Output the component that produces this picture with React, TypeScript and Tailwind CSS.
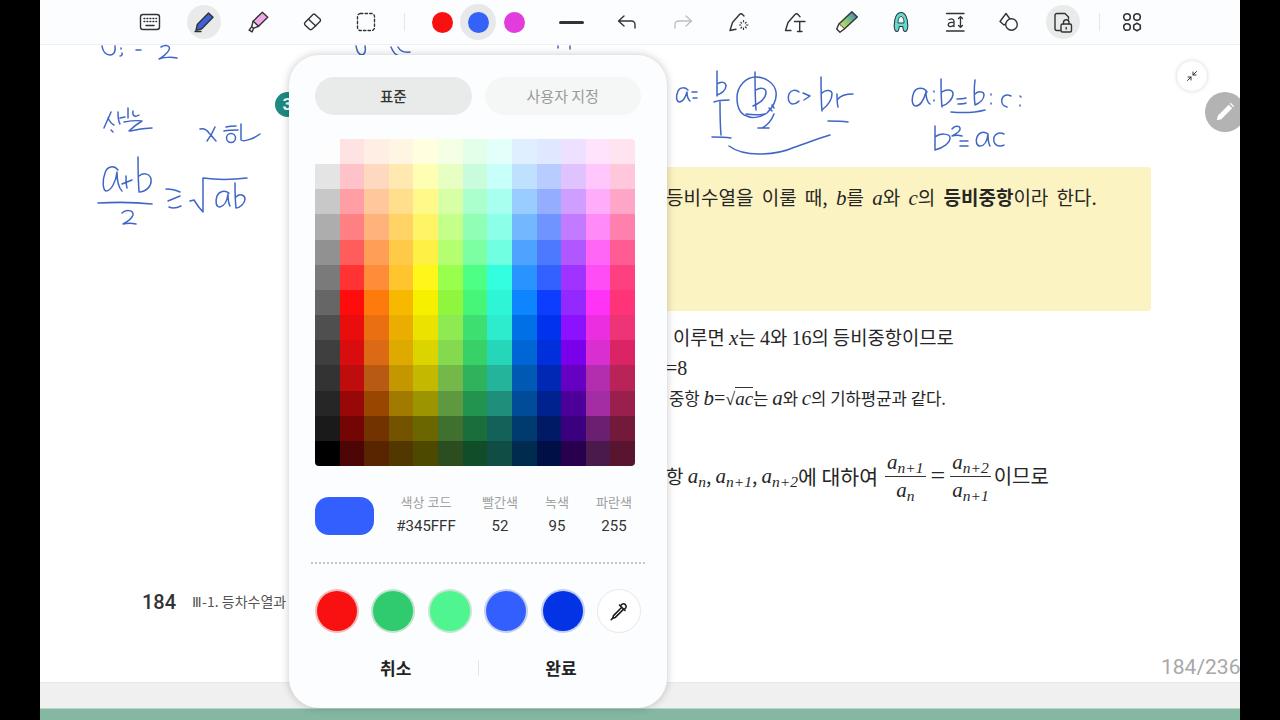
import React from "react";

const KR = "font-['Noto_Sans_CJK_KR','Noto_Sans',sans-serif]";
const palette = [
"bg-[#fdfdfd]","bg-[#ffe3e3]","bg-[#ffeee3]","bg-[#fff5e3]","bg-[#ffffe0]","bg-[#f4ffe3]","bg-[#e3ffe9]","bg-[#e3fff9]","bg-[#e0efff]","bg-[#e0e8ff]","bg-[#eee0ff]","bg-[#ffe3fc]","bg-[#ffe3ee]",
"bg-[#e4e4e4]","bg-[#ffc2c9]","bg-[#ffd9bf]","bg-[#ffe9b0]","bg-[#ffffb3]","bg-[#e8ffc4]","bg-[#c9fcdc]","bg-[#c9fffa]","bg-[#bfe0ff]","bg-[#b8ccff]","bg-[#e0c2ff]","bg-[#ffc7fc]","bg-[#ffc7dc]",
"bg-[#c8c8c8]","bg-[#ff9fa3]","bg-[#ffc79c]","bg-[#ffde8c]","bg-[#fff98a]","bg-[#d6ffa6]","bg-[#aaffcc]","bg-[#a8fff0]","bg-[#99ccff]","bg-[#94adff]","bg-[#cf9fff]","bg-[#ffadfa]","bg-[#ffa6c8]",
"bg-[#adadad]","bg-[#ff8083]","bg-[#ffb27a]","bg-[#ffd366]","bg-[#fff466]","bg-[#c4ff8a]","bg-[#8fffb5]","bg-[#8cffe8]","bg-[#73b8ff]","bg-[#7094ff]","bg-[#c27aff]","bg-[#ff8af8]","bg-[#ff80ad]",
"bg-[#919191]","bg-[#ff5c5c]","bg-[#ff9f57]","bg-[#ffca47]","bg-[#fff045]","bg-[#b4ff70]","bg-[#7affa3]","bg-[#70ffe0]","bg-[#4da3ff]","bg-[#4d79ff]","bg-[#b057ff]","bg-[#ff66f5]","bg-[#ff5c94]",
"bg-[#7a7a7a]","bg-[#ff3333]","bg-[#ff8c38]","bg-[#ffc42e]","bg-[#fff71a]","bg-[#99ff4d]","bg-[#4dff85]","bg-[#33ffe0]","bg-[#2994ff]","bg-[#3361ff]","bg-[#a033ff]","bg-[#ff4df5]","bg-[#ff4080]",
"bg-[#666666]","bg-[#ff0d0d]","bg-[#ff7a0d]","bg-[#f7b900]","bg-[#f7ef00]","bg-[#8ff53d]","bg-[#47f578]","bg-[#2ef5d6]","bg-[#0d85ff]","bg-[#0d3dff]","bg-[#9429ff]","bg-[#ff33f5]","bg-[#ff3377]",
"bg-[#4f4f4f]","bg-[#ea0d0d]","bg-[#ea6f10]","bg-[#ebae00]","bg-[#ebe200]","bg-[#8eea52]","bg-[#3de070]","bg-[#2ceccd]","bg-[#0070e6]","bg-[#0033ee]","bg-[#8c12ff]","bg-[#ea2ee0]","bg-[#ee3377]",
"bg-[#3f3f3f]","bg-[#d90d0d]","bg-[#dc6a14]","bg-[#deaa00]","bg-[#dcd400]","bg-[#85d94f]","bg-[#38d167]","bg-[#26d6b8]","bg-[#0066d6]","bg-[#002fdb]","bg-[#7a00eb]","bg-[#d92ed0]","bg-[#db2466]",
"bg-[#333333]","bg-[#bf0d0d]","bg-[#b85a14]","bg-[#c49600]","bg-[#c4b800]","bg-[#75b84a]","bg-[#2eb35c]","bg-[#24b39b]","bg-[#0059b3]","bg-[#0029b3]","bg-[#6600c2]","bg-[#b32eae]","bg-[#b82457]",
"bg-[#262626]","bg-[#990808]","bg-[#994700]","bg-[#a37a00]","bg-[#9c9400]","bg-[#5e9940]","bg-[#239450]","bg-[#1f8f7c]","bg-[#004c99]","bg-[#00228f]","bg-[#4d0099]","bg-[#a32ea3]","bg-[#991f4d]",
"bg-[#1a1a1a]","bg-[#730505]","bg-[#733300]","bg-[#735200]","bg-[#6b6600]","bg-[#40702e]","bg-[#1a6e3b]","bg-[#14615a]","bg-[#003b70]","bg-[#001a66]","bg-[#3b0080]","bg-[#6b1f70]","bg-[#731a3b]",
"bg-[#000000]","bg-[#4d0505]","bg-[#592400]","bg-[#523800]","bg-[#4d4a00]","bg-[#2b4d1f]","bg-[#124d29]","bg-[#0f4d45]","bg-[#002b4f]","bg-[#001047]","bg-[#29004d]","bg-[#4a1a4d]","bg-[#591430]",
];

function Ic({ children }: { children: React.ReactNode }) {
  return (
    <svg width="24" height="24" viewBox="0 0 24 24" fill="none" stroke="#333" strokeWidth="1.4" strokeLinecap="round" strokeLinejoin="round">
      {children}
    </svg>
  );
}

function Slot({ children, active, className }: { children: React.ReactNode; active?: boolean; className?: string }) {
  return (
    <div className={`flex h-[34px] w-[34px] shrink-0 items-center justify-center rounded-full ${active ? "bg-[#e9ebeb]" : ""} ${className ?? ""}`}>
      {children}
    </div>
  );
}

function Toolbar() {
  return (
    <div className="flex h-[45px] shrink-0 items-center border-b border-[#eef0f2] bg-[#fcfdfe] pl-[93px]">
      <Slot>
        <Ic>
          <rect x="2.5" y="4.5" width="19" height="15" rx="2.5" />
          <path d="M6 8.5h.8M9 8.5h.8M12 8.5h.8M15 8.5h.8M18 8.5h.5M6 11.5h.8M9 11.5h.8M12 11.5h.8M15 11.5h.8M18 11.5h.5M8 15.5h8" strokeWidth="1.5" />
        </Ic>
      </Slot>
      <Slot active className="ml-5">
        <Ic>
          <path d="M16.5 3l4.5 4.3L9.5 19 4 20.4 5.3 14.5z" fill="#3b62d9" />
          <path d="M3 21.5h6" />
        </Ic>
      </Slot>
      <Slot className="ml-5">
        <svg width="26" height="26" viewBox="0 0 24 24" fill="none" stroke="#333" strokeWidth="1.3" strokeLinecap="round" strokeLinejoin="round">
          <path d="M16 3l5 4.6-8.5 8.4-5-4.8z" fill="#f0a8e8" />
          <path d="M7.5 11.2l-1.3 5 1.7 1.6 4.6-1.8M6.2 16.2L3.8 19.6l2.8 1.6 1.3-3.4" />
        </svg>
      </Slot>
      <Slot className="ml-5">
        <Ic>
          <path d="M15 4.5l5 4.6a1.6 1.6 0 0 1 0 2.3l-7.5 7.4a2.5 2.5 0 0 1-3.5 0l-3.8-3.6a2 2 0 0 1 0-3L13 4.5a1.5 1.5 0 0 1 2 0z" />
          <path d="M8.8 9.5l7 6.4" />
        </Ic>
      </Slot>
      <Slot className="ml-5">
        <Ic>
          <rect x="3.5" y="3.5" width="17" height="17" rx="3" strokeDasharray="2.4 2.2" />
        </Ic>
      </Slot>
      <div className="ml-[21px] h-[18px] w-px bg-[#e4e6e8]" />
      <div className="ml-[19px] flex items-center">
        <div className="flex h-9 w-9 items-center justify-center"><div className="h-[21px] w-[21px] rounded-full bg-[#f91010]" /></div>
        <div className="flex h-9 w-9 items-center justify-center rounded-full bg-[#e6e8ea]"><div className="h-[21px] w-[21px] rounded-full bg-[#3461f8]" /></div>
        <div className="flex h-9 w-9 items-center justify-center"><div className="h-[21px] w-[21px] rounded-full bg-[#e23cdc]" /></div>
      </div>
      <div className="ml-[27px] h-[3px] w-[25px] rounded-full bg-[#333]" />
      <Slot className="ml-[26px]">
        <Ic><path d="M9 6l-5.5 5L9 16M4 11h12.5a3.5 3.5 0 0 1 3.5 3.5V18" /></Ic>
      </Slot>
      <Slot className="ml-[22px]">
        <Ic><g stroke="#bdbfc1"><path d="M15 6l5.5 5L15 16M20 11H7.5A3.5 3.5 0 0 0 4 14.5V18" /></g></Ic>
      </Slot>
      <Slot className="ml-[22px]">
        <Ic>
          <path d="M3 20.5l2.5-8 7-8a2 2 0 0 1 3 0l1.5 1.6M3 20.5l6-1.2" />
          <path d="M16.5 10.5v1.2M16.5 18v1.5M12.5 15h1.3M19.2 15h1.8M13.8 12.3l.8.8M18.4 17l.9.9M19.2 12.3l-.9.8M14 18l.8-.8" strokeWidth="1.2" />
        </Ic>
      </Slot>
      <Slot className="ml-[22px]">
        <Ic>
          <path d="M2.5 20.5l2.5-8 7-8a2 2 0 0 1 3 0l2 2.2M2.5 20.5H8" />
          <path d="M11.5 11.5H22M16.7 11.5V21.5M14.5 21.5h4.5" />
        </Ic>
      </Slot>
      <Slot className="ml-[18px]">
        <svg width="26" height="26" viewBox="0 0 24 24" fill="none" stroke="#333" strokeWidth="1.3" strokeLinejoin="round">
          <defs>
            <linearGradient id="grad" x1="0" y1="1" x2="1" y2="0">
              <stop offset="0" stopColor="#e8e06a" />
              <stop offset="0.5" stopColor="#7cc77a" />
              <stop offset="1" stopColor="#3a6fd0" />
            </linearGradient>
          </defs>
          <path d="M16.5 2.5l5 4.8L9.5 18.5l-5-4.7z" fill="url(#grad)" />
          <path d="M4.5 13.8L2.5 18.5l3 3 4-3" fill="#fff" />
        </svg>
      </Slot>
      <Slot className="ml-5">
        <svg width="24" height="24" viewBox="0 0 24 24" fill="none" strokeLinejoin="round">
          <path d="M12 2.5c-4.5 0-6.8 6-6.8 13 0 3.5.8 6 2.8 6s2-3 2.2-5h3.6c.2 2 .2 5 2.2 5s2.8-2.5 2.8-6c0-7-2.3-13-6.8-13z" fill="#63d9d2" stroke="#2f3a3a" strokeWidth="1.1" />
          <path d="M12 6.5c-2 0-3 3-3 6.5h6c0-3.5-1-6.5-3-6.5z" fill="#e8fbfa" stroke="#2f3a3a" strokeWidth="1" />
        </svg>
      </Slot>
      <Slot className="ml-5">
        <svg width="24" height="24" viewBox="0 0 24 24" fill="none" stroke="#333" strokeWidth="1.3" strokeLinecap="round">
          <path d="M3.5 3.5h17.5M3.5 21h17.5" strokeWidth="1.4" />
          <path d="M17.5 7v10M15.5 8.5l2-1.8 2 1.8M15.5 15.5l2 1.8 2-1.8" />
          <path d="M6 9.5c2-1 5-.8 5 1.5v5.5M11 12.6c-3-.5-5.8 0-5.8 2.2s3.8 2.4 5.8.2" />
        </svg>
      </Slot>
      <Slot className="ml-5">
        <Ic>
          <path d="M9 3.5l-6 8 4 3.5 7-4.5z" strokeWidth="1.4" />
          <circle cx="14.5" cy="14.5" r="5.8" fill="#fcfdfe" />
        </Ic>
      </Slot>
      <Slot active className="ml-5">
        <Ic>
          <path d="M9.5 20.5H6a2 2 0 0 1-2-2v-13a2 2 0 0 1 2-2h8l3.5 3.5V9" />
          <rect x="10" y="14" width="10.5" height="8" rx="1.5" />
          <path d="M12.5 14v-2a2.8 2.8 0 0 1 5.5 0v2M15.2 17.5v1.5" />
        </Ic>
      </Slot>
      <div className="ml-[19px] h-[18px] w-px bg-[#e4e6e8]" />
      <Slot className="ml-[15px]">
        <Ic>
          <circle cx="7" cy="7" r="3.3" strokeWidth="1.6" />
          <circle cx="17" cy="7" r="3.3" strokeWidth="1.6" />
          <circle cx="7" cy="17" r="3.3" strokeWidth="1.6" />
          <path d="M17 13.2l3.3 1.9v3.8L17 20.8l-3.3-1.9v-3.8z" strokeWidth="1.6" />
        </Ic>
      </Slot>
    </div>
  );
}

function Ink() {
  return (
    <svg className="pointer-events-none absolute left-0 top-0" width="1200" height="720" viewBox="40 0 1200 720" fill="none" stroke="#3f66c6" strokeWidth="1.5" strokeLinecap="round" strokeLinejoin="round">
      {/* top-left partial */}
      <path d="M102 46c1 6 4 9 8 9s6-4 5-9M121 48v1M122 53c1 2-1 3-2 3M136 50h5M161 47c5-3 10-1 8 3-2 4-8 8-10 9 4-2 13-2 18-1" />
      <path d="M356 46c1 5 2 8 6 9 3-1 4-4 3-9M391 47c2 5 4 8 8 9M398 47c2 4 5 6 12 5M558 46v2M570 46v3" />
      {/* left notes */}
      <path d="M104 128c2-5 5-11 7-16M108 118c2 4 4 6 6 7M111 130l2 2M118 112c0 5 0 9 2 12M120 118l5-1M128 108v10M133 111c-1 6 3 6 6 4M124 122c6-1 13-2 18-1-5 3-8 5-13 10 7-1 16-3 23-3" />
      <path d="M200 129c4-1 7 1 9 4 3 3 5 6 7 8M215 127c-2 5-5 10-8 14M226 127c4-1 7-1 10-1M224 131c5-1 9-1 14-1" />
      <circle cx="231" cy="138" r="4.5" />
      <path d="M241 124v16c3 2 12-1 19-6" />
      {/* a+b / 2 >= sqrt(ab) */}
      <path d="M118 170c-4-5-11-4-13 3-3 8-2 17 1 18 5 0 10-9 11-19 0 7 1 15 5 19M122 184l10-4M126 176c0 4 0 8 1 12M138 157c0 11 0 22 1 34M139 176c5-4 11-2 12 3 1 7-5 13-12 13" />
      <path d="M98 203c18-1 36-1 54 1" strokeWidth="1.7" />
      <path d="M122 213c4-4 12-3 11 2-1 3-6 7-10 9 4-1 9-1 13 0" />
      <path d="M166 189c5 0 10 1 14 3M169 207c4 2 8 1 12-1M180 196l-12 5" />
      <path d="M190 201l4-1c3 5 6 9 9 12 0-11 0-22 0-34 14 2 28 2 44 0" />
      <path d="M229 193c-4-3-10-2-12 3-2 6-1 11 3 11 4-1 7-5 8-13 0 5 0 9 2 12M235 183c0 8 0 16 1 25M236 197c4-4 9-2 9 2 0 4-5 9-9 9" />
      {/* a = b/r ... */}
      <path d="M688 90c-3-3-8-3-10 1-2 5-2 10 1 11 3 0 6-3 8-10 0 4 1 7 3 9M692 92h5M693 98h4" />
      <path d="M717 71c0 8 0 17 0 25M717 84c4-3 9-2 9 2 0 4-5 8-9 9" />
      <path d="M714 102c5-2 10-2 15-2M720 102c0 11 0 22 1 33M712 137c6 0 12 0 19 1" />
      <path d="M756 77c-10 0-19 9-19 21 0 10 4 17 10 18 6 3 14 1 20-3 6-6 10-14 9-21-1-8-10-15-20-15z" />
      <path d="M755 72c0 12 0 25 1 38M756 90c4-3 10-2 10 2 0 6-6 11-13 14M746 114c6 1 13 1 19 0M758 128c4 0 8 0 11 0M769 108l3 3M772 105l2 3M762 128c4-2 9-6 12-14" />
      <path d="M799 92c-3-3-8-2-10 2-2 5 0 9 3 10 3 0 5-1 7-3M803 93l7 3-6 4" />
      <path d="M821 77c0 11 0 23 1 34M822 93c4-4 10-3 10 1 0 6-5 12-10 16M837 94c0 5 0 9 1 13M838 99c3-4 8-5 15-5M828 121c6 0 13 0 20 1" />
      <path d="M729 146c8 6 18 8 30 8 14 0 25-2 36-7 12-4 24-9 35-12" />
      {/* a:b = b:c */}
      <path d="M927 92c-3-5-10-5-13 0-3 7-2 14 2 14 4 0 8-6 10-14 0 5 1 10 4 12M934 91v1M934 100v1M941 79c0 9 0 19 1 28M942 92c4-3 11-3 11 2s-6 11-11 12M957 99c3 0 6 0 9-1M958 104c3 0 6 0 8-1M975 80c-1 8-1 16 0 25M975 94c3-3 9-3 9 1s-4 8-9 10M991 94v1M991 103v1M1011 96c-4-2-8-1-9 3-1 4 1 7 5 8M1020 96l1 1M1020 105v1M951 112c11 1 23 1 34-2" />
      <path d="M935 126c0 8 0 16 0 24M935 137c5-4 15-4 15 1 0 5-7 10-15 12M952 129c2-3 7-4 8-1 1 3-4 6-8 8 3-1 7-1 10 0M960 141h8M960 146h8M988 134c-4-3-9-2-11 3-2 5 0 9 3 9 4 0 7-4 8-12 0 5 0 9 2 12M1004 134c-4-2-8-1-10 3-1 5 1 9 6 9 1 0 3 0 4-1" />
    </svg>
  );
}

function Italic({ children }: { children: React.ReactNode }) {
  return <span className="font-['Liberation_Serif',serif] italic text-[21px]">{children}</span>;
}
function Serif({ children }: { children: React.ReactNode }) {
  return <span className="font-['Liberation_Serif',serif] text-[20px]">{children}</span>;
}
function Sub({ children }: { children: React.ReactNode }) {
  return <sub className="font-['Liberation_Serif',serif] text-[15.5px] italic leading-none">{children}</sub>;
}
function Frac({ top, bottom }: { top: React.ReactNode; bottom: React.ReactNode }) {
  return (
    <span className="mx-[3px] inline-flex flex-col items-center align-middle leading-none">
      <span className="border-b border-[#333] px-[2px] pb-[3px]">{top}</span>
      <span className="pt-[2px]">{bottom}</span>
    </span>
  );
}

function Doc() {
  return (
    <div className="flex min-h-0 flex-1 flex-col">
      <div className={`ml-[626px] pt-[122px] text-[19px] leading-[24px] text-[#262626] ${KR}`}>
        <div className="h-[144px] w-[485px] rounded-r-[3px] bg-[#fcf3c2] pt-[18px] whitespace-nowrap [word-spacing:4px]">
          등비수열을 이룰 때, <Italic>b</Italic>를 <Italic>a</Italic>와 <Italic>c</Italic>의 <b className="font-bold">등비중항</b>이라 한다.
        </div>
        <div className="mt-[14px] whitespace-nowrap pl-[7px] text-[18.8px]">
          이루면 <Italic>x</Italic>는 <Serif>4</Serif>와 <Serif>16</Serif>의 등비중항이므로
        </div>
        <div className="mt-[5px] whitespace-nowrap"><Serif>=8</Serif></div>
        <div className="mt-[6px] whitespace-nowrap pl-[3px] text-[16.7px]">
          중항 <Italic>b</Italic><Serif>=</Serif>
          <span className="font-['Liberation_Serif',serif] text-[18px]">√</span>
          <span className="border-t border-[#333] font-['Liberation_Serif',serif] text-[19px] italic">ac</span>는 <Italic>a</Italic>와 <Italic>c</Italic>의 기하평균과 같다.
        </div>
        <div className="mt-[40px] flex items-center whitespace-nowrap">
          <span>항&nbsp;</span>
          <Italic>a<Sub>n</Sub></Italic><span>,&nbsp;</span>
          <Italic>a<Sub>n+1</Sub></Italic><span>,&nbsp;</span>
          <Italic>a<Sub>n+2</Sub></Italic><span className="text-[20.5px]">에 대하여</span>
          <span className="w-[4px]" />
          <Frac top={<Italic>a<Sub>n+1</Sub></Italic>} bottom={<Italic>a<Sub>n</Sub></Italic>} />
          <span className="mx-[2px] font-['Liberation_Serif',serif] text-[26px]">=</span>
          <Frac top={<Italic>a<Sub>n+2</Sub></Italic>} bottom={<Italic>a<Sub>n+1</Sub></Italic>} />
          <span className="text-[20px]">이므로</span>
        </div>
      </div>
      <div className={`mt-auto mb-[68px] ml-[102px] flex items-center whitespace-nowrap ${KR}`}>
        <span className="font-['Roboto',sans-serif] text-[20px] font-medium leading-[24px] text-[#333]">184</span>
        <span className="ml-[16px] text-[14px] leading-[20px] text-[#555]"><span className="font-['Liberation_Serif',serif]">Ⅲ</span>-1. 등차수열과</span>
      </div>
    </div>
  );
}

const swatches = [
  ["bg-[#f91010]", "ring-[#f2bcbc]"],
  ["bg-[#2fcb6e]", "ring-[#bfe4cd]"],
  ["bg-[#4ff58e]", "ring-[#c5e6d2]"],
  ["bg-[#345fff]", "ring-[#c5d0ee]"],
  ["bg-[#0433e6]", "ring-[#c2cff2]"],
];

const Label = "text-[13px] leading-[18px] text-[#a0a0a0] whitespace-nowrap";
const Value = "mt-[6px] font-['Roboto',sans-serif] text-[15px] leading-[18px] text-[#333] whitespace-nowrap";

function Popup() {
  return (
    <div className={`absolute left-[249px] top-[55px] flex h-[653px] w-[378px] flex-col rounded-[30px] bg-[#fbfdfe] px-[26px] shadow-[0_0_8px_rgba(0,0,0,0.22)] ${KR}`}>
      <div className="mt-[22px] flex gap-[13px]">
        <div className="flex h-[38px] w-[157px] items-center justify-center rounded-full bg-[#e9ebeb] text-[14.5px] font-medium text-[#333]">표준</div>
        <div className="flex h-[38px] w-[157px] items-center justify-center rounded-full bg-[#f5f6f6] text-[15px] text-[#9a9a9a]">사용자 지정</div>
      </div>
      <div className="mt-[24px] grid h-[327px] w-[320px] grid-cols-[repeat(13,1fr)] grid-rows-[repeat(13,1fr)] overflow-hidden rounded-[4px]">
        {palette.map((c, i) => (
          <div key={i} className={c} />
        ))}
      </div>
      <div className="mt-[27px] flex items-start">
        <div className="mt-[4px] h-[38px] w-[59px] rounded-[14px] bg-[#345fff]" />
        <div className="ml-[21px] flex w-[62px] flex-col items-center">
          <span className={Label}>색상 코드</span>
          <span className={Value}>#345FFF</span>
        </div>
        <div className="ml-[23px] flex w-[40px] flex-col items-center">
          <span className={Label}>빨간색</span>
          <span className={Value}>52</span>
        </div>
        <div className="ml-[17px] flex w-[40px] flex-col items-center">
          <span className={Label}>녹색</span>
          <span className={Value}>95</span>
        </div>
        <div className="ml-[17px] flex w-[40px] flex-col items-center">
          <span className={Label}>파란색</span>
          <span className={Value}>255</span>
        </div>
      </div>
      <div className="-mx-[4px] mt-[27px] border-t-2 border-dotted border-[#c4c7c9]" />
      <div className="mt-[25px] flex items-center pl-[2px]">
        {swatches.map(([bg, ring], i) => (
          <div key={i} className={`mr-[16.5px] h-[40px] w-[40px] rounded-full ring-2 ${bg} ${ring}`} />
        ))}
        <div className="-ml-[2px] flex h-[44px] w-[44px] items-center justify-center rounded-full border border-[#e6e8e9] bg-white">
          <svg width="22" height="22" viewBox="0 0 24 24" fill="none" stroke="#1c1c1c" strokeWidth="1.7" strokeLinecap="round" strokeLinejoin="round">
            <path d="M15.5 4.5a3 3 0 0 1 4 4l-2 2-4-4zM12.5 5.5l6 6M14.5 8.5l-8.5 8.5-.8 2.8 2.8-.8 8.5-8.5" />
            <path d="M5.2 19.8L3.5 21.5" />
          </svg>
        </div>
      </div>
      <div className="relative mt-[23px] flex h-[24px] items-center text-[17px] font-bold text-[#222]">
        <span className="ml-[65px]">취소</span>
        <div className="ml-[67px] h-[16px] w-px bg-[#e4e6e8]" />
        <span className="ml-[66px]">완료</span>
      </div>
    </div>
  );
}

export default function App() {
  return (
    <div className="flex h-[720px] w-[1280px] overflow-hidden bg-black">
      <div className="relative ml-10 flex h-[720px] w-[1200px] flex-col overflow-hidden bg-white">
        <Toolbar />
        <Doc />
        <div className="h-[26px] shrink-0 border-t border-[#e8e8e8] bg-[#f0f0f0]" />
        <div className="h-[12px] shrink-0 border-t border-[#b9d4c8] bg-[#85b8a3]" />

        <Ink />

        <div className="absolute left-[235px] top-[92px] flex h-[25px] w-[25px] items-center justify-center rounded-full bg-[#1f8a80] font-['Roboto',sans-serif] text-[17px] font-bold text-white">3</div>

        <div className="absolute left-[1137px] top-[61px] flex h-[30px] w-[30px] items-center justify-center rounded-full bg-white shadow-[0_0_4px_rgba(0,0,0,0.18)]">
          <svg width="12" height="12" viewBox="0 0 24 24" fill="none" stroke="#333" strokeWidth="2" strokeLinecap="round" strokeLinejoin="round">
            <path d="M3 21l7-7M4 14h6v6M21 3l-7 7M14 4v6h6" />
          </svg>
        </div>
        <div className="absolute left-[1165px] top-[92px] flex h-10 w-10 items-center justify-center rounded-full bg-[#b3b3b3]">
          <svg width="22" height="22" viewBox="0 0 24 24" fill="#fff">
            <path d="M3 21l1.2-5L16 4.2l3.8 3.8L8 19.8zM17.2 3l1-1 3.8 3.8-1 1z" />
          </svg>
        </div>
        <div className="absolute left-[1121px] top-[655px] whitespace-nowrap font-['Roboto',sans-serif] text-[21px] leading-[24px] text-[#a8a8a8]">184/236</div>

        <Popup />
      </div>
    </div>
  );
}
